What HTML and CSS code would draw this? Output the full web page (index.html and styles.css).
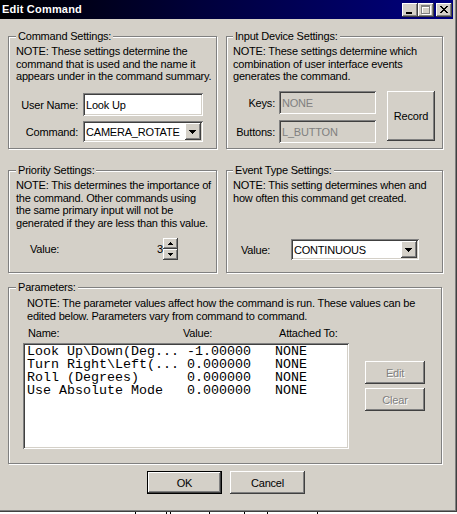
FILE: index.html
```html
<!DOCTYPE html>
<html>
<head>
<meta charset="utf-8">
<title>Edit Command</title>
<link rel="stylesheet" href="styles.css">
</head>
<body>
<div class="window">
  <div class="titlebar">
    <span class="title">Edit Command</span>
    <div class="caps">
      <span class="cbtn raised"><svg width="16" height="14" viewBox="0 0 16 14"><rect x="4" y="9" width="6" height="2" fill="#000"/></svg></span>
      <span class="cbtn raised"><svg width="16" height="14" viewBox="0 0 16 14"><g fill="#fff"><rect x="4" y="3" width="9" height="2"/><rect x="4" y="3" width="1" height="9"/><rect x="12" y="3" width="1" height="9"/><rect x="4" y="11" width="9" height="1"/></g><g fill="#808080"><rect x="3" y="2" width="9" height="2"/><rect x="3" y="2" width="1" height="9"/><rect x="11" y="2" width="1" height="9"/><rect x="3" y="10" width="9" height="1"/></g></svg></span>
      <span class="cbtn close raised"><svg width="16" height="14" viewBox="0 0 16 14"><g fill="#000"><rect x="4" y="3" width="2" height="1"/><rect x="10" y="3" width="2" height="1"/><rect x="5" y="4" width="2" height="1"/><rect x="9" y="4" width="2" height="1"/><rect x="6" y="5" width="4" height="1"/><rect x="7" y="6" width="2" height="1"/><rect x="6" y="7" width="4" height="1"/><rect x="5" y="8" width="2" height="1"/><rect x="9" y="8" width="2" height="1"/><rect x="4" y="9" width="2" height="1"/><rect x="10" y="9" width="2" height="1"/></g></svg></span>
    </div>
  </div>

  <div class="content">
    <div class="row row1">
      <div class="group g-left">
        <div class="glabel">Command Settings:</div>
        <p class="note">NOTE: These settings determine the<br>command that is used and the name it<br>appears under in the command summary.</p>
        <div class="cmd-grid">
          <span class="flabel">User Name:</span>
          <div class="field sunken text-field"><span class="ftext">Look Up</span></div>
          <span class="flabel">Command:</span>
          <div class="field sunken combo"><span class="ftext">CAMERA_ROTATE</span><span class="dd raised"><svg width="16" height="17" viewBox="0 0 16 17"><g fill="#000"><rect x="4" y="7" width="7" height="1"/><rect x="5" y="8" width="5" height="1"/><rect x="6" y="9" width="3" height="1"/><rect x="7" y="10" width="1" height="1"/></g></svg></span></div>
        </div>
      </div>

      <div class="group g-right">
        <div class="glabel">Input Device Settings:</div>
        <p class="note">NOTE: These settings determine which<br>combination of user interface events<br>generates the command.</p>
        <div class="dev-row">
          <div class="dev-grid">
            <span class="flabel">Keys:</span>
            <div class="field sunken ro-field"><span class="ftext">NONE</span></div>
            <span class="flabel">Buttons:</span>
            <div class="field sunken ro-field"><span class="ftext">L_BUTTON</span></div>
          </div>
          <button class="btn raised record">Record</button>
        </div>
      </div>
    </div>

    <div class="row row2">
      <div class="group g-left">
        <div class="glabel">Priority Settings:</div>
        <p class="note">NOTE: This determines the importance of<br>the command. Other commands using<br>the same primary input will not be<br>generated if they are less than this value.</p>
        <div class="prio-row">
          <span class="prio-label">Value:</span>
          <span class="num">3</span>
          <div class="spin">
            <span class="sbtn raised"><svg width="15" height="11" viewBox="0 0 15 11"><g fill="#000"><rect x="7" y="4" width="1" height="1"/><rect x="6" y="5" width="3" height="1"/><rect x="5" y="6" width="5" height="1"/></g></svg></span>
            <span class="sbtn raised"><svg width="15" height="11" viewBox="0 0 15 11"><g fill="#000"><rect x="5" y="4" width="5" height="1"/><rect x="6" y="5" width="3" height="1"/><rect x="7" y="6" width="1" height="1"/></g></svg></span>
          </div>
        </div>
      </div>

      <div class="group g-right">
        <div class="glabel">Event Type Settings:</div>
        <p class="note">NOTE: This setting determines when and<br>how often this command get created.</p>
        <div class="event-row">
          <span class="event-label">Value:</span>
          <div class="field sunken combo event-combo"><span class="ftext">CONTINUOUS</span><span class="dd raised"><svg width="16" height="17" viewBox="0 0 16 17"><g fill="#000"><rect x="4" y="7" width="7" height="1"/><rect x="5" y="8" width="5" height="1"/><rect x="6" y="9" width="3" height="1"/><rect x="7" y="10" width="1" height="1"/></g></svg></span></div>
        </div>
      </div>
    </div>

    <div class="group params">
      <div class="glabel">Parameters:</div>
      <p class="note">NOTE: The parameter values affect how the command is run. These values can be<br>edited below. Parameters vary from command to command.</p>
      <div class="headers">
        <span class="h-name">Name:</span>
        <span class="h-value">Value:</span>
        <span class="h-att">Attached To:</span>
      </div>
      <div class="list-row">
        <div class="listbox sunken">
<pre class="items">Look Up\Down(Deg... -1.00000   NONE
Turn Right\Left(... 0.000000   NONE
Roll (Degrees)      0.000000   NONE
Use Absolute Mode   0.000000   NONE</pre>
        </div>
        <div class="side-btns">
          <button class="btn raised disabled">Edit</button>
          <button class="btn raised disabled">Clear</button>
        </div>
      </div>
    </div>

    <div class="footer">
      <button class="btn default">OK</button>
      <button class="btn raised">Cancel</button>
    </div>
  </div>
</div>
<div class="desk"></div>
</body>
</html>
```

FILE: styles.css
```css
* {
  box-sizing: border-box;
}

body {
  margin: 0;
  background: #ffffff;
  font-family: "Liberation Sans", Arial, sans-serif;
  font-size: 11px;
  color: #000;
  letter-spacing: -0.2px;
}

button {
  font: inherit;
  letter-spacing: inherit;
  color: inherit;
  border: 0;
  margin: 0;
  padding: 0;
  background: #d4d0c8;
}

.window {
  width: 457px;
  height: 512px;
  background: #d4d0c8;
  border-right: 1px solid #404040;
  border-bottom: 1px solid #404040;
  box-shadow: inset -1px -1px 0 #808080;
  padding: 0 3px 3px 0;
  display: flex;
  flex-direction: column;
}

.raised {
  background: #d4d0c8;
  box-shadow: inset -1px -1px 0 #404040, inset 1px 1px 0 #ffffff, inset -2px -2px 0 #808080, inset 2px 2px 0 #d4d0c8;
}

.sunken {
  box-shadow: inset 1px 1px 0 #808080, inset -1px -1px 0 #ffffff, inset 2px 2px 0 #404040, inset -2px -2px 0 #d4d0c8;
}

/* Title bar */
.titlebar {
  height: 19px;
  flex: none;
  background: linear-gradient(90deg, #000000 0%, #00003c 45%, #000080 100%);
  display: flex;
  align-items: center;
  justify-content: space-between;
}

.title {
  padding-left: 2px;
  color: #fff;
  font-weight: bold;
  font-size: 11px;
  letter-spacing: 0.2px;
  line-height: 19px;
}

.caps {
  display: flex;
  margin-right: 1px;
}

.cbtn {
  display: block;
  width: 16px;
  height: 14px;
}

.cbtn svg {
  display: block;
}

.cbtn.close {
  margin-left: 2px;
}

/* Content */
.content {
  flex: 1;
  padding: 17px 0 0 8px;
  display: flex;
  flex-direction: column;
}

.row {
  display: flex;
  gap: 9px;
  flex: none;
}

.row1 {
  height: 113px;
}

.row2 {
  height: 103px;
  margin-top: 21px;
}

.group {
  border: 1px solid #808080;
  box-shadow: 1px 1px 0 #ffffff, inset 1px 1px 0 #ffffff;
  display: flex;
  flex-direction: column;
  padding: 0 7px;
}

.g-left {
  width: 209px;
}

.g-right {
  width: 217px;
  padding-left: 6px;
}

.glabel {
  align-self: flex-start;
  margin-top: -7px;
  height: 13px;
  line-height: 13px;
  padding: 0 2px;
  background: #d4d0c8;
  white-space: nowrap;
}

.g-right .glabel {
  margin-left: 0;
}

.note {
  margin: 2px 0 0;
  line-height: 12.5px;
  white-space: nowrap;
}

/* Command settings */
.cmd-grid {
  margin-top: 10.5px;
  display: grid;
  grid-template-columns: 62px 120px;
  grid-template-rows: 23px 21px;
  column-gap: 5px;
  row-gap: 5px;
}

.flabel {
  align-self: center;
  text-align: right;
  white-space: nowrap;
}

.field {
  display: flex;
  align-items: center;
  padding-left: 3px;
  overflow: hidden;
}

.text-field {
  background: #fff;
}

.ftext {
  white-space: nowrap;
  overflow: hidden;
}

.combo {
  background: #fff;
  padding: 2px 2px 2px 3px;
}

.combo .ftext {
  flex: 1;
  min-width: 0;
}

.dd {
  flex: none;
  width: 16px;
  height: 17px;
  display: block;
}

.dd svg {
  display: block;
}

/* Input device */
.dev-row {
  margin-top: 8.5px;
  display: flex;
  align-items: flex-start;
}

.dev-grid {
  display: grid;
  grid-template-columns: 42px 97px;
  grid-template-rows: 23px 23px;
  column-gap: 4px;
  row-gap: 6px;
}

.ro-field {
  background: #d4d0c8;
  color: #808080;
}

.btn {
  display: flex;
  align-items: center;
  justify-content: center;
  white-space: nowrap;
}

.record {
  margin-left: 11px;
  width: 49px;
  height: 50px;
}

/* Priority */
.prio-row {
  margin-top: 9px;
  display: flex;
  align-items: center;
  height: 22px;
}

.prio-label {
  margin-left: 14px;
  width: 127px;
}

.num {
  width: 6px;
  text-align: right;
}

.spin {
  display: flex;
  flex-direction: column;
  width: 15px;
}

.sbtn {
  display: block;
  width: 15px;
  height: 11px;
}

.sbtn svg {
  display: block;
}

/* Event type */
.event-row {
  margin-top: 35px;
  display: flex;
  align-items: center;
}

.event-label {
  margin-left: 8px;
  width: 50px;
}

.event-combo {
  width: 128px;
  height: 21px;
}

/* Parameters */
.params {
  margin-top: 14px;
  width: 434px;
  height: 177px;
  flex: none;
  padding-left: 14px;
}

.params .glabel {
  margin-left: -7px;
}

.params .note {
  margin: 3px 0 0 4px;
}

.headers {
  margin: 5px 0 0 5px;
  display: flex;
  line-height: 12.5px;
  white-space: nowrap;
}

.h-name {
  width: 155px;
}

.h-value {
  width: 96px;
}

.list-row {
  margin-top: 3.5px;
  display: flex;
  align-items: flex-start;
}

.listbox {
  width: 326px;
  height: 106px;
  background: #fff;
  padding: 2px 2px 2px 4px;
}

.items {
  margin: 0;
  font-family: "Liberation Mono", "Courier New", monospace;
  font-size: 13.33px;
  line-height: 13px;
  letter-spacing: 0;
  color: #000;
}

.side-btns {
  margin: 18px 0 0 16px;
  display: flex;
  flex-direction: column;
  gap: 4px;
}

.side-btns .btn {
  width: 60px;
  height: 23px;
}

.disabled {
  color: #808080;
  text-shadow: 1px 1px 0 #ffffff;
}

/* Footer */
.footer {
  margin: 7px 0 0 139px;
  display: flex;
  gap: 8px;
}

.footer .btn {
  width: 75px;
  height: 23px;
}

.default {
  border: 1px solid #000;
  background: #d4d0c8;
  box-shadow: inset -1px -1px 0 #404040, inset 1px 1px 0 #ffffff, inset -2px -2px 0 #808080;
}

.desk {
  height: 2px;
  width: 457px;
  background:
    linear-gradient(#000, #000) 135px 0 / 1px 2px no-repeat,
    linear-gradient(#000, #000) 166px 0 / 1px 2px no-repeat,
    linear-gradient(#000, #000) 170px 0 / 1px 2px no-repeat,
    linear-gradient(#000, #000) 209px 0 / 1px 2px no-repeat,
    linear-gradient(#000, #000) 244px 0 / 1px 2px no-repeat,
    linear-gradient(#000, #000) 267px 0 / 1px 2px no-repeat,
    linear-gradient(#000, #000) 317px 0 / 1px 2px no-repeat,
    #ffffff;
}
```
